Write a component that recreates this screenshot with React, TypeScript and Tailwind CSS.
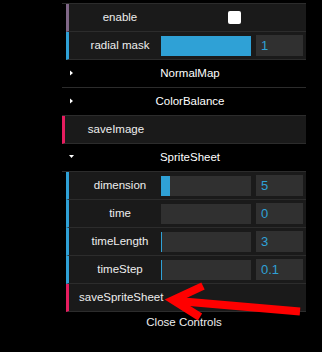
const font = { fontFamily: '"Liberation Sans", Arial, sans-serif' };

function Label({ text }: { text: string }) {
  return (
    <div className="w-[92px] shrink-0 pl-[10px] text-center text-[11.5px] text-[#eeeeee] whitespace-nowrap">
      {text}
    </div>
  );
}

function SliderRow({ label, fill, value }: { label: string; fill: number; value: string }) {
  return (
    <div className="flex items-center h-[28px] bg-[#1a1a1a] border-b border-[#2c2c2c] border-l-[3px] border-l-[#2fa1d6]">
      <Label text={label} />
      <div className="w-[90px] h-[20px] bg-[#303030] flex">
        <div className="h-full bg-[#2fa1d6]" style={{ width: fill }} />
      </div>
      <div className="ml-[5px] w-[47px] h-[21px] bg-[#303030] pl-[5px] text-[13px] leading-[21px] text-[#2fa1d6]">
        {value}
      </div>
    </div>
  );
}

function ButtonRow({ label }: { label: string }) {
  return (
    <div className="flex items-center h-[28px] bg-[#1a1a1a] border-b border-[#2c2c2c] border-l-[3px] border-l-[#e61d5f]">
      <Label text={label} />
    </div>
  );
}

function FolderTitle({ label, open }: { label: string; open?: boolean }) {
  return (
    <div className="relative flex items-center justify-center h-[28px] bg-black border-b border-[#2c2c2c] pl-[12px] text-[11.5px] text-white">
      <span className="absolute left-[7px] top-[10px]">
        {open ? (
          <svg width="6" height="6" viewBox="0 0 6 6">
            <path d="M0 1 L5 1 L2.5 4 Z" fill="#fff" />
          </svg>
        ) : (
          <svg width="6" height="6" viewBox="0 0 6 6">
            <path d="M1 0.5 L4 3 L1 5.5 Z" fill="#fff" />
          </svg>
        )}
      </span>
      {label}
    </div>
  );
}

export default function App() {
  return (
    <div className="relative w-[322px] h-[352px] bg-black overflow-hidden" style={font}>
      <div className="ml-[62px] pt-[3px] w-[244px]">
        <div className="border-t border-[#2c2c2c]">
          <div className="ml-[4px]">
            <div className="flex items-center h-[28px] bg-[#1a1a1a] border-b border-[#2c2c2c] border-l-[3px] border-l-[#806787]">
              <Label text="enable" />
              <div className="ml-[67px] w-[13px] h-[13px] bg-white rounded-[2px]" />
            </div>
            <SliderRow label="radial mask" fill={90} value="1" />
          </div>
          <FolderTitle label="NormalMap" />
          <FolderTitle label="ColorBalance" />
          <ButtonRow label="saveImage" />
          <FolderTitle label="SpriteSheet" open />
          <div className="ml-[4px]">
            <SliderRow label="dimension" fill={9} value="5" />
            <SliderRow label="time" fill={0} value="0" />
            <SliderRow label="timeLength" fill={1} value="3" />
            <SliderRow label="timeStep" fill={1} value="0.1" />
            <ButtonRow label="saveSpriteSheet" />
          </div>
          <div className="h-[20px] leading-[20px] text-center text-[11.5px] text-[#eeeeee]">Close Controls</div>
        </div>
      </div>

      {/* red annotation arrow */}
      <svg className="absolute inset-0 pointer-events-none" width="322" height="352" viewBox="0 0 322 352">
        <line x1="300" y1="311.5" x2="178" y2="301" stroke="#ff0000" strokeWidth="8" />
        <polyline points="203,286 173,300 200,317" fill="none" stroke="#ff0000" strokeWidth="8" strokeLinejoin="miter" />
      </svg>
    </div>
  );
}
